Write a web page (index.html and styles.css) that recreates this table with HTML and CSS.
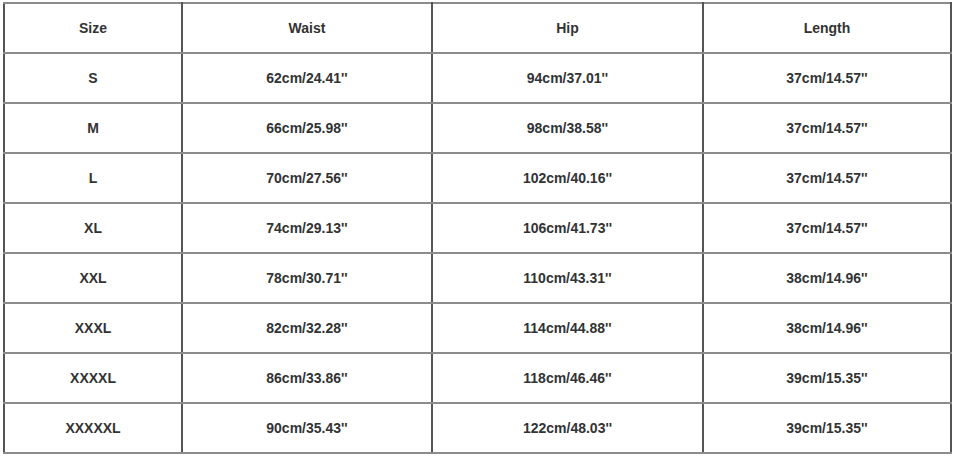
FILE: index.html
```html
<!DOCTYPE html>
<html>
<head>
<meta charset="utf-8">
<link rel="stylesheet" href="styles.css">
</head>
<body>
<div class="wrap">
<table class="size-table">
  <colgroup>
    <col class="c1"><col class="c2"><col class="c3"><col class="c4">
  </colgroup>
  <thead>
    <tr><th>Size</th><th>Waist</th><th>Hip</th><th>Length</th></tr>
  </thead>
  <tbody>
    <tr><td>S</td><td>62cm/24.41''</td><td>94cm/37.01''</td><td>37cm/14.57''</td></tr>
    <tr><td>M</td><td>66cm/25.98''</td><td>98cm/38.58''</td><td>37cm/14.57''</td></tr>
    <tr><td>L</td><td>70cm/27.56''</td><td>102cm/40.16''</td><td>37cm/14.57''</td></tr>
    <tr><td>XL</td><td>74cm/29.13''</td><td>106cm/41.73''</td><td>37cm/14.57''</td></tr>
    <tr><td>XXL</td><td>78cm/30.71''</td><td>110cm/43.31''</td><td>38cm/14.96''</td></tr>
    <tr><td>XXXL</td><td>82cm/32.28''</td><td>114cm/44.88''</td><td>38cm/14.96''</td></tr>
    <tr><td>XXXXL</td><td>86cm/33.86''</td><td>118cm/46.46''</td><td>39cm/15.35''</td></tr>
    <tr><td>XXXXXL</td><td>90cm/35.43''</td><td>122cm/48.03''</td><td>39cm/15.35''</td></tr>
  </tbody>
</table>
</div>
</body>
</html>
```
FILE: styles.css
```css
html, body {
  margin: 0;
  padding: 0;
  background: #ffffff;
}
.wrap {
  padding: 2px 3px;
}
.size-table {
  border-collapse: collapse;
  table-layout: fixed;
  width: 947px;
  font-family: "Liberation Sans", Arial, sans-serif;
  font-weight: bold;
  font-size: 14px;
  color: #333333;
}
.c1 { width: 178px; }
.c2 { width: 250px; }
.c3 { width: 271px; }
.c4 { width: 248px; }
.size-table th,
.size-table td {
  height: 48px;
  padding: 0;
  text-align: center;
  vertical-align: middle;
  border-top: 2px solid #8c8c8c;
  border-bottom: 2px solid #8c8c8c;
  border-left: 2px solid #555555;
  border-right: 2px solid #555555;
  font-weight: bold;
}
```
